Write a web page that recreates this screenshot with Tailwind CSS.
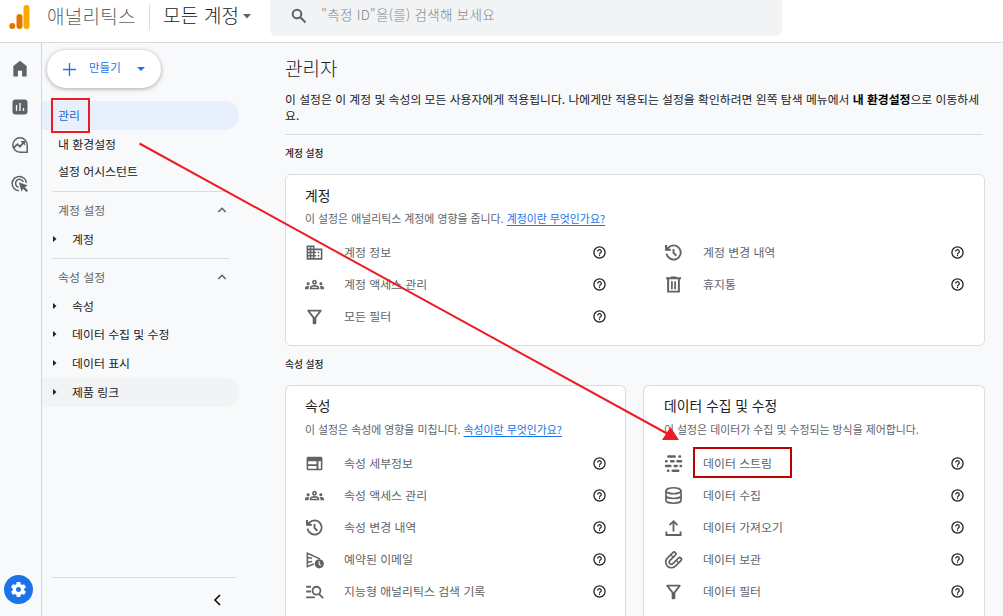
<!DOCTYPE html>
<html lang="ko">
  <head>
    <meta charset="UTF-8" />
    <meta name="viewport" content="width=device-width, initial-scale=1.0" />
    <title>애널리틱스 - 관리자</title>
    <script src="https://cdn.jsdelivr.net/npm/@tailwindcss/browser@4"></script>
  </head>
  <body
    class="relative flex h-screen flex-col overflow-hidden bg-[#f8f9fb] font-['Noto_Sans_CJK_KR',sans-serif] text-[11.9px] text-[#202124]"
  >
    <!-- Icons -->
    <svg class="hidden">
      <symbol id="i-business" viewBox="0 0 24 24"><path d="M12 7V3H2v18h20V7H12zM6 19H4v-2h2v2zm0-4H4v-2h2v2zm0-4H4V9h2v2zm0-4H4V5h2v2zm4 12H8v-2h2v2zm0-4H8v-2h2v2zm0-4H8V9h2v2zm0-4H8V5h2v2zm10 12h-8v-2h2v-2h-2v-2h2v-2h-2V9h8v10zm-2-8h-2v2h2v-2zm0 4h-2v2h2v-2z" /></symbol>
      <symbol id="i-groups" viewBox="0 0 24 24"><path d="M4 13c1.1 0 2-.9 2-2s-.9-2-2-2-2 .9-2 2 .9 2 2 2zm1.13 1.1c-.37-.06-.74-.1-1.13-.1-.99 0-1.93.21-2.78.58C.48 14.9 0 15.62 0 16.43V18h4.5v-1.61c0-.83.23-1.61.63-2.29zM20 13c1.1 0 2-.9 2-2s-.9-2-2-2-2 .9-2 2 .9 2 2 2zm4 3.43c0-.81-.48-1.53-1.22-1.85-.85-.37-1.79-.58-2.78-.58-.39 0-.76.04-1.13.1.4.68.63 1.46.63 2.29V18H24v-1.57zm-7.76-2.78c-1.17-.52-2.61-.9-4.24-.9s-3.07.39-4.24.9C6.68 14.13 6 15.21 6 16.39V18h12v-1.61c0-1.18-.68-2.26-1.76-2.74zM8.07 16c.09-.23.13-.39.91-.69.97-.38 1.99-.56 3.02-.56s2.05.18 3.02.56c.77.3.81.46.91.69H8.07zM12 8c.55 0 1 .45 1 1s-.45 1-1 1-1-.45-1-1 .45-1 1-1m0-2c-1.66 0-3 1.34-3 3s1.34 3 3 3 3-1.34 3-3-1.34-3-3-3z" /></symbol>
      <symbol id="i-filter" viewBox="1.5 1 21 21"><path d="M7 6h10l-5.01 6.3L7 6zm-2.75-.39C6.27 8.2 10 13 10 13v6c0 .55.45 1 1 1h2c.55 0 1-.45 1-1v-6s3.72-4.8 5.74-7.39A.998.998 0 0 0 18.95 4H5.04c-.83 0-1.3.95-.79 1.61z" /></symbol>
      <symbol id="i-history" viewBox="0 0 24 24"><g fill="none" stroke="currentColor" stroke-width="2.4"><path d="M3.2 13.5a9 9 0 1 0 2.3-7.7L3.3 8" /><path d="M2.6 2.5v6h6M12 7.5v5l3.6 3.6" /></g><path d="M1.8 2.8v6.4h6.4z" /></symbol>
      <symbol id="i-trash" viewBox="0 0 24 24"><g fill="none" stroke="currentColor" stroke-width="2.5"><path d="M5.2 5v16h13.6V5M2.500 4.200h19M8.500 3h7" /><path stroke-width="2.200" d="M10 8v10M14 8v10" /></g></symbol>
      <symbol id="i-web" viewBox="0 0 24 24"><path d="M20 3.500H4c-1.1 0-1.99.9-1.99 2L2 18.500c0 1.1.9 2 2 2h16c1.1 0 2-.9 2-2V5.500c0-1.1-.9-2-2-2zm-5.500 15H4v-3.500h10.500v3.500zm0-5.500H4V9h10.500v4zm5.500 5.500h-3V9h3v9.500z" /></symbol>
      <symbol id="i-schedule" viewBox="0 0 24 24"><path fill="none" stroke="currentColor" stroke-width="2" d="M11 17.6 3 21V4l16 7.2M3 9.5l6 1M3 15.5l6-1" /><circle cx="18" cy="17.5" r="5.8" /><path fill="none" stroke="#fff" stroke-width="1.4" d="M17.8 14.3v3.4l2 2" /></symbol>
      <symbol id="i-manage" viewBox="0 0 24 24"><path fill="none" stroke="currentColor" stroke-width="2.3" d="M1.500 6h6M1.500 12h6M1.500 19.500h11M18 15.5l5 5" /><circle cx="14.5" cy="11" r="5" fill="none" stroke="currentColor" stroke-width="2.3" /></symbol>
      <symbol id="i-stream" viewBox="0 0 24 24"><path fill="none" stroke="currentColor" stroke-width="3.2" stroke-linecap="round" d="M5.500 3.200H13.500M19.500 3.200h.8M2.700 9.200h.6M9 9.200h3M17 9.200h4.500M2.700 15.200H8M13.500 15.200h2.500M21 15.200h.5M5 21.200h.4M11 21.200H18" /></symbol>
      <symbol id="i-database" viewBox="0 0 24 24"><g fill="none" stroke="currentColor" stroke-width="2.1"><ellipse cx="12" cy="6" rx="9.500" ry="3.800" /><path d="M2.500 6v12c0 2.100 4.200 3.800 9.500 3.800s9.500-1.700 9.500-3.800V6M2.500 12c0 2.100 4.200 3.800 9.500 3.800s9.500-1.700 9.500-3.800" /></g></symbol>
      <symbol id="i-upload" viewBox="0 0 24 24"><path fill="none" stroke="currentColor" stroke-width="2.300" d="M12 17V4.500M7 9l5-5 5 5M3 17v4.500h18v-4.500" /></symbol>
      <symbol id="i-magnet" viewBox="0 0 24 24"><g fill="none" stroke-linecap="round"><path stroke="currentColor" stroke-width="6.600" d="m12.800 4.800-7 7a4.950 4.950 0 0 0 7 7l7-7" /><path stroke="#fff" stroke-width="2.300" d="m12.800 4.800-7 7a4.950 4.950 0 0 0 7 7l7-7" /><path stroke="currentColor" stroke-width="1.700" d="m9 6.500 2.500 2.500M16 13.500l2.500 2.500" /></g></symbol>
      <symbol id="i-help" viewBox="0 0 24 24"><circle cx="12" cy="12" r="10.300" fill="none" stroke="currentColor" stroke-width="2.400" /><path fill="none" stroke="currentColor" stroke-width="2.200" d="M8.700 10a3.300 3.300 0 1 1 5.300 2.600c-1.300.9-2 1.400-2 2.900" /><path d="M11 16.500h2v2.200h-2z" /></symbol>
      <symbol id="i-up" viewBox="0 0 12 12"><path fill="none" stroke="currentColor" stroke-width="1.600" d="M2.300 8 6 4.300 9.700 8" /></symbol>
      <symbol id="i-caret" viewBox="0 0 4 8"><path d="M0 1v6l3.500-3z" /></symbol>
    </svg>

    <!-- Header -->
    <header class="flex h-[43px] shrink-0 border-b border-[#dadce0] bg-white">
      <svg class="mt-[4px] ml-[9px] h-[26px] w-[21px]" viewBox="0 0 21 26">
        <rect x="14.500" y="1" width="6" height="24" rx="3" fill="#f9ab00" />
        <rect x="7.500" y="10" width="6" height="15" rx="3" fill="#e37400" />
        <circle cx="3.300" cy="22" r="3" fill="#e37400" />
      </svg>
      <span class="ml-[17px] h-[34px] w-[102px] text-[19px] leading-[32px] font-light tracking-[0.3px] whitespace-nowrap text-[#5f6368]">애널리틱스</span>
      <span class="mt-[4px] h-[26px] w-px bg-[#dadce0]"></span>
      <span class="ml-[13px] text-[19px] leading-[30px] font-light tracking-[0.2px] whitespace-nowrap">모든 계정</span>
      <svg class="mt-[14px] ml-[4px] h-[5px] w-[8px] text-[#5f6368]" viewBox="0 0 8 5" fill="currentColor"><path d="M0 0h8L4 4.500z" /></svg>
      <div class="ml-[19px] flex h-[36px] w-[512px] rounded-b-md bg-[#f1f3f4] text-[#80868b]">
        <svg class="mt-[8px] ml-[21px] h-[16px] w-[16px] text-[#5f6368]" viewBox="0 0 16 16" fill="none" stroke="currentColor" stroke-width="2"><circle cx="6" cy="6" r="4.300" /><path d="m9.300 9.300 5.200 5.200" /></svg>
        <span class="ml-[14px] text-[13.500px] leading-[29px] font-light tracking-[0.3px] whitespace-nowrap">"측정 ID"을(를) 검색해 보세요</span>
      </div>
    </header>

    <div class="flex min-h-0 flex-1">
      <!-- Rail -->
      <div class="flex w-[42px] shrink-0 flex-col items-center border-r border-[#d3d6da] pt-[16px] pr-[2px] text-[#5f6368]">
        <svg class="h-[20px] w-[20px]" viewBox="0 0 24 24" fill="currentColor"><path d="M12 2 4 8.500V21h5.500v-7h5v7H20V8.500z" /></svg>
        <svg class="mt-[18px] h-[20px] w-[20px]" viewBox="0 0 20 20"><rect x="2.500" y="2.500" width="15" height="15" rx="3" fill="currentColor" /><path d="M6.500 8v6M10 6v8M13.500 11v3" stroke="#fff" stroke-width="1.300" /></svg>
        <svg class="mt-[18px] h-[20px] w-[20px]" viewBox="0 0 20 20" fill="none" stroke="currentColor" stroke-width="1.500"><path d="M10 17.200A7.200 7.200 0 1 1 17.200 10v7.200z" /><path d="m4 12.500 3.500-3.300 2.500 2.500 3.500-4" stroke-width="1.800" /><path d="M10.300 6h4.900v4.700z" fill="currentColor" stroke="none" /></svg>
        <svg class="mt-[19px] h-[20px] w-[20px]" viewBox="0 0 20 20" fill="none" stroke="currentColor" stroke-width="1.500"><path d="M9 16.800A7.200 7.200 0 1 1 16.500 9" /><path d="M8.500 13.200A4 4 0 1 1 13.300 8" /><path d="m8.800 8.300 9 3.200-3 1.500 3.200 3.500-1.500 1.500-3.500-3.300-1.500 3z" fill="currentColor" stroke="none" /></svg>
        <div class="mt-auto mr-[2px] mb-[12px] flex h-[29px] w-[29px] items-center justify-center rounded-full bg-[#1a73e8]">
          <svg class="h-[19px] w-[19px] text-white" viewBox="0 0 24 24" fill="currentColor"><path d="M19.140 12.940c.04-.3.06-.61.06-.94 0-.32-.02-.64-.07-.94l2.030-1.580c.18-.14.23-.41.12-.61l-1.920-3.320c-.12-.22-.37-.29-.59-.22l-2.390.96c-.5-.38-1.030-.7-1.620-.94l-.36-2.540c-.04-.24-.24-.41-.48-.41h-3.840c-.24 0-.43.17-.47.41l-.36 2.540c-.59.24-1.130.57-1.620.94l-2.390-.96c-.22-.08-.47 0-.59.22L2.740 8.870c-.12.21-.08.47.12.61l2.030 1.580c-.05.3-.09.63-.09.94s.02.64.07.94l-2.030 1.580c-.18.14-.23.41-.12.61l1.920 3.320c.12.22.37.29.59.22l2.390-.96c.5.38 1.030.7 1.620.94l.36 2.540c.05.24.24.41.48.41h3.840c.24 0 .44-.17.47-.41l.36-2.540c.59-.24 1.130-.56 1.620-.94l2.390.96c.22.08.47 0 .59-.22l1.920-3.320c.12-.22.07-.47-.12-.61l-2.010-1.580zM12 15.200c-1.800 0-3.200-1.400-3.200-3.200s1.400-3.200 3.200-3.200 3.200 1.400 3.200 3.200-1.400 3.200-3.200 3.200z" /></svg>
        </div>
      </div>

      <!-- Sidebar -->
      <nav class="flex w-[197px] shrink-0 flex-col whitespace-nowrap">
        <button class="mt-[7px] ml-[5px] flex h-[38px] w-[114px] shrink-0 items-center rounded-full bg-white pl-[16px] text-[11.500px] text-[#1a73e8] shadow-[0_1px_4px_rgba(60,64,67,0.45)]">
          <svg class="h-[13px] w-[13px]" viewBox="0 0 13 13" stroke="currentColor" stroke-width="1.300"><path d="M6.500 0v13M0 6.500h13" /></svg>
          <span class="ml-[13px] pb-[2px]">만들기</span>
          <svg class="ml-[16px] h-[4px] w-[8px]" viewBox="0 0 8 4" fill="currentColor"><path d="M0 0h8L4 4z" /></svg>
        </button>
        <div class="mt-[13px] flex h-[29px] shrink-0 items-center rounded-r-full bg-[#e8f0fe] pb-[2px] pl-[16px] text-[#1967d2]">관리</div>
        <div class="flex h-[28px] items-center pb-[1px] pl-[16px]">내 환경설정</div>
        <div class="flex h-[28px] items-center pb-[2px] pl-[16px]">설정 어시스턴트</div>
        <div class="mt-[5px] ml-[10px] h-px w-[177px] shrink-0 bg-[#dadce0]"></div>
        <div class="mt-[4px] flex h-[29px] items-center justify-between pr-[11px] pb-[2px] pl-[16px] text-[#5f6368]">계정 설정<svg class="h-[12px] w-[12px]"><use href="#i-up" /></svg></div>
        <div class="flex h-[29px] items-center pb-[2px] pl-[11px]"><svg class="mr-[15px] h-[8px] w-[4px]" fill="currentColor"><use href="#i-caret" /></svg>계정</div>
        <div class="mt-[4px] ml-[10px] h-px w-[177px] shrink-0 bg-[#dadce0]"></div>
        <div class="mt-[4px] flex h-[29px] items-center justify-between pr-[11px] pb-[2px] pl-[16px] text-[#5f6368]">속성 설정<svg class="h-[12px] w-[12px]"><use href="#i-up" /></svg></div>
        <div class="flex h-[29px] items-center pb-[2px] pl-[11px]"><svg class="mr-[15px] h-[8px] w-[4px]" fill="currentColor"><use href="#i-caret" /></svg>속성</div>
        <div class="flex h-[28px] items-center pb-[2px] pl-[11px]"><svg class="mr-[15px] h-[8px] w-[4px]" fill="currentColor"><use href="#i-caret" /></svg>데이터 수집 및 수정</div>
        <div class="flex h-[29px] items-center pb-[2px] pl-[11px]"><svg class="mr-[15px] h-[8px] w-[4px]" fill="currentColor"><use href="#i-caret" /></svg>데이터 표시</div>
        <div class="flex h-[29px] items-center rounded-r-full bg-[#f1f3f4] pb-[2px] pl-[11px]"><svg class="mr-[15px] h-[8px] w-[4px]" fill="currentColor"><use href="#i-caret" /></svg>제품 링크</div>
        <div class="mt-auto ml-[10px] h-px w-[184px] shrink-0 bg-[#dadce0]"></div>
        <svg class="mt-[16px] mb-[10px] ml-[171px] h-[12px] w-[8px] shrink-0" viewBox="0 0 8 12" fill="none" stroke="#000" stroke-width="1.500"><path d="M7 1 2 6l5 5" /></svg>
      </nav>

      <!-- Main -->
      <main class="ml-[46px] w-[700px] shrink-0 overflow-hidden whitespace-nowrap">
        <h1 class="mt-[9px] h-[33px] text-[19px] leading-[32px] font-light">관리자</h1>
        <p class="mt-[6px] box-content h-[43px] w-[698px] border-b border-[#dadce0] text-[11.840px] leading-[16px]">이 설정은 이 계정 및 속성의 모든 사용자에게 적용됩니다. 나에게만 적용되는 설정을 확인하려면 왼쪽 탐색 메뉴에서 <b class="text-black">내 환경설정</b>으로 이동하세<br />요.</p>
        <h2 class="mt-[8px] h-[20px] text-[9.700px] leading-[20px] font-medium">계정 설정</h2>

        <section class="mt-[11px] h-[172px] rounded-md border border-[#dadce0] bg-white px-[19px] pt-[9px]">
          <h3 class="h-[22px] text-[13.800px] leading-[22px]">계정</h3>
          <p class="mt-[3px] h-[18px] text-[10.900px] leading-[18px] text-[#5f6368]">이 설정은 애널리틱스 계정에 영향을 줍니다. <a class="text-[#1a73e8] underline underline-offset-2">계정이란 무엇인가요?</a></p>
          <div class="mt-[9px] grid grid-cols-[301px_300px] gap-x-[58px]">
            <ul data-rows="business:계정 정보|groups:계정 액세스 관리|filter:모든 필터"></ul>
            <ul data-rows="history:계정 변경 내역|trash:휴지통"></ul>
          </div>
        </section>

        <h2 class="mt-[8px] h-[20px] text-[9.700px] leading-[20px] font-medium">속성 설정</h2>

        <div class="mt-[11px] flex gap-[17px]">
          <section class="h-[231px] w-[341px] rounded-t-md border border-b-0 border-[#dadce0] bg-white px-[19px] pt-[8px]">
            <h3 class="h-[22px] text-[13.800px] leading-[22px]">속성</h3>
            <p class="mt-[4px] h-[18px] text-[10.900px] leading-[18px] text-[#5f6368]">이 설정은 속성에 영향을 미칩니다. <a class="text-[#1a73e8] underline underline-offset-2">속성이란 무엇인가요?</a></p>
            <ul class="mt-[9px]" data-rows="web:속성 세부정보|groups:속성 액세스 관리|history:속성 변경 내역|schedule:예약된 이메일|manage:지능형 애널리틱스 검색 기록"></ul>
          </section>
          <section class="h-[231px] w-[342px] rounded-t-md border border-b-0 border-[#dadce0] bg-white px-[20px] pt-[8px]">
            <h3 class="h-[22px] text-[13.800px] leading-[22px]">데이터 수집 및 수정</h3>
            <p class="mt-[4px] h-[18px] text-[10.900px] leading-[18px] text-[#5f6368]">이 설정은 데이터가 수집 및 수정되는 방식을 제어합니다.</p>
            <ul class="mt-[9px]" data-rows="stream:데이터 스트림|database:데이터 수집|upload:데이터 가져오기|magnet:데이터 보관|filter:데이터 필터"></ul>
          </section>
        </div>
      </main>
    </div>

    <!-- Annotations -->
    <div class="absolute top-[98px] left-[51px] h-[35px] w-[39px] border-2 border-[#ed1c24]"></div>
    <div class="absolute top-[447px] left-[693px] h-[31px] w-[99px] border-2 border-[#c00000]"></div>
    <svg class="pointer-events-none absolute inset-0 h-full w-full">
      <path d="M139.500 143.500 667 433.500" stroke="#ed1c24" stroke-width="2" />
      <path d="M679 440h-17l8.500-13z" fill="#ed1c24" />
    </svg>

    <script>
      document.querySelectorAll("[data-rows]").forEach((list) => {
        list.innerHTML = list.dataset.rows
          .split("|")
          .map((row) => {
            const [icon, label] = row.split(":");
            return `
              <li class="flex h-[32px] items-center text-[#5f6368]">
                <svg class="mr-[20px] h-[19px] w-[19px]" fill="currentColor"><use href="#i-${icon}" /></svg>
                <span class="flex-1 pb-[1px]">${label}</span>
                <svg class="h-[13px] w-[13px] text-[#202124]" fill="currentColor"><use href="#i-help" /></svg>
              </li>`;
          })
          .join("");
      });
    </script>
  </body>
</html>
